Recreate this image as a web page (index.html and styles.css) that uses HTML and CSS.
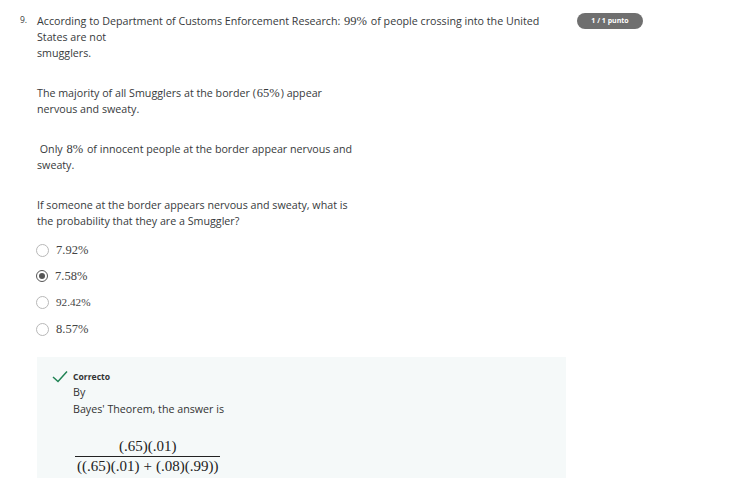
FILE: index.html
```html
<!DOCTYPE html>
<html>
<head>
<meta charset="utf-8">
<link rel="stylesheet" href="styles.css">
</head>
<body>
<div class="question">
  <div class="num">9.</div>
  <div class="content">
    <p class="para">According to Department of Customs Enforcement Research: <span class="m">99%</span> of people crossing into the United States are not<br>smugglers.</p>
    <p class="para narrow">The majority of all Smugglers at the border (<span class="m">65%</span>) appear nervous and sweaty.</p>
    <p class="para narrow">&nbsp;Only <span class="m">8%</span> of innocent people at the border appear nervous and sweaty.</p>
    <p class="para narrow">If someone at the border appears nervous and sweaty, what is the probability that they are a Smuggler?</p>
    <div class="options">
      <div class="opt"><span class="radio"></span><span class="m opt-text">7.92%</span></div>
      <div class="opt"><span class="radio checked"></span><span class="m opt-text">7.58%</span></div>
      <div class="opt"><span class="radio"></span><span class="m opt-text small">92.42%</span></div>
      <div class="opt"><span class="radio"></span><span class="m opt-text">8.57%</span></div>
    </div>
    <div class="feedback">
      <svg class="check" width="16" height="13" viewBox="0 0 16 13"><polyline points="1,7 6,11.5 15,1.5" fill="none" stroke="#1f8354" stroke-width="1.5"/></svg>
      <div class="fb-body">
        <div class="fb-title">Correcto</div>
        <div class="fb-text">By</div>
        <div class="fb-text">Bayes' Theorem, the answer is</div>
        <div class="frac">
          <span class="numer">(.65)(.01)</span>
          <span class="denom">((.65)(.01)<span class="op">+</span>(.08)(.99))</span>
        </div>
      </div>
    </div>
  </div>
  <div class="badge">1 / 1 punto</div>
</div>
</body>
</html>
```

FILE: styles.css
```css
body {
  margin: 0;
  background: #ffffff;
  font-family: "Open Sans", "Noto Sans", sans-serif;
  color: #373a3c;
}
.question {
  display: flex;
  align-items: flex-start;
  padding: 13px 0 0 20px;
}
.num {
  width: 17px;
  font-size: 8.5px;
  line-height: 12px;
  padding-top: 1px;
}
.content {
  width: 529px;
  flex: none;
}
.para {
  margin: 0 0 24px;
  font-size: 10.7px;
  line-height: 16px;
  width: 505px;
}
.para.narrow {
  width: 322px;
}
.m {
  font-family: "Liberation Serif", "DejaVu Serif", serif;
  font-size: 12.5px;
  line-height: 1;
  display: inline-block;
  margin: 0 1px;
}
.options {
  margin-top: -16px;
  display: flex;
  flex-direction: column;
}
.opt {
  height: 26.3px;
  display: flex;
  align-items: center;
}
.radio {
  width: 11px;
  height: 11px;
  border: 1px solid #b8b8b8;
  border-radius: 50%;
  margin-left: -1px;
  margin-right: 7px;
  box-sizing: content-box;
  position: relative;
  flex: none;
}
.radio.checked {
  border: 1.5px solid #555;
  width: 10px;
  height: 10px;
}
.radio.checked::after {
  content: "";
  position: absolute;
  left: 2px;
  top: 2px;
  width: 6px;
  height: 6px;
  border-radius: 50%;
  background: #555;
}
.opt-text {
  color: #444;
  margin: 0;
}
.opt-text.small {
  font-size: 11.2px;
}
.feedback {
  margin-top: 15px;
  background: #f5f9f9;
  height: 140px;
  display: flex;
  padding: 13px 0 0 15px;
  box-sizing: border-box;
}
.check {
  flex: none;
  margin-right: 5px;
}
.fb-title {
  font-size: 8.6px;
  font-weight: bold;
  line-height: 14px;
  color: #333;
}
.fb-text {
  font-size: 10.7px;
  line-height: 17px;
  color: #333;
}
.frac {
  margin-top: 20px;
  display: inline-flex;
  flex-direction: column;
  align-items: center;
  font-family: "Liberation Serif", "DejaVu Serif", serif;
  font-size: 15px;
  color: #222;
  margin-left: 2px;
}
.numer {
  line-height: 17px;
  padding: 0 2px 1px;
}
.denom {
  line-height: 17px;
  border-top: 1px solid #222;
  padding: 1px 2px 0;
}
.op {
  margin: 0 4px;
}
.badge {
  margin-left: 11px;
  margin-top: 0;
  width: 66px;
  height: 16px;
  border-radius: 8px;
  background: #6f6f6f;
  color: #fff;
  font-size: 7px;
  font-weight: bold;
  line-height: 16px;
  text-align: center;
  flex: none;
}
```
